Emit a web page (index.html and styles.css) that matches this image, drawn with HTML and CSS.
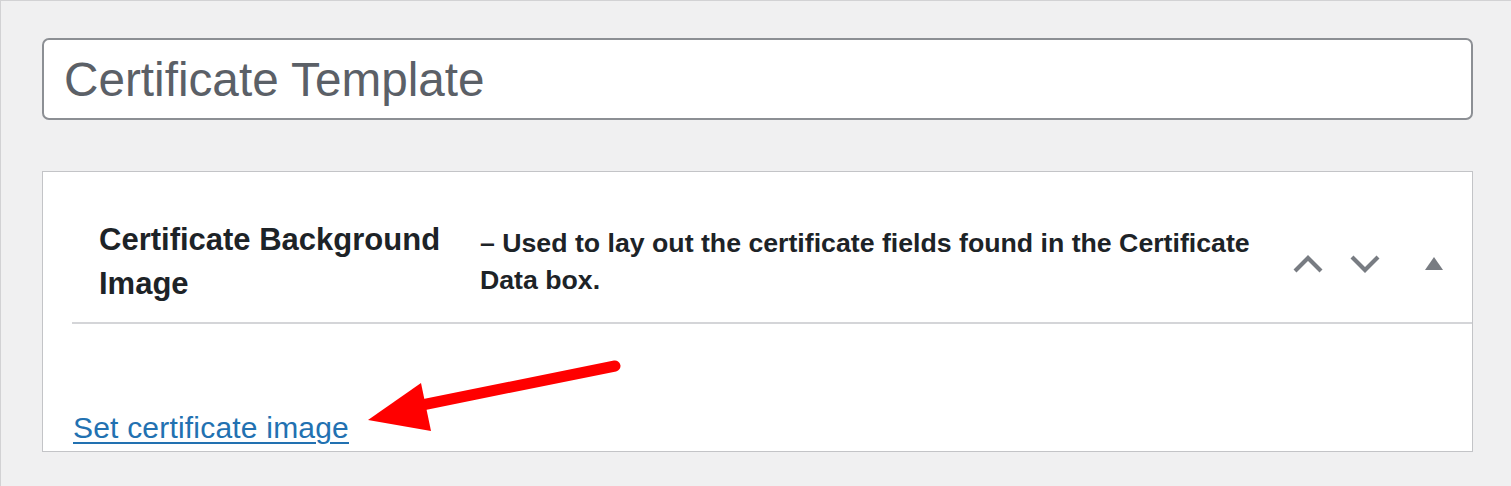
FILE: index.html
```html
<!DOCTYPE html>
<html lang="en">
<head>
<meta charset="utf-8">
<title>Certificate Template</title>
<link rel="stylesheet" href="styles.css">
</head>
<body>
<div class="screen">
  <div class="title-field">Certificate Template</div>

  <div class="postbox">
    <div class="postbox-header">
      <h2 class="hndle">Certificate Background Image</h2>
      <p class="description">– Used to lay out the certificate fields found in the Certificate Data box.</p>
      <div class="handle-actions">
        <button class="handle-btn" aria-label="Move up">
          <svg width="30" height="18" viewBox="0 0 30 18"><path d="M2 16 L15 3 L28 16" fill="none" stroke="#787c82" stroke-width="4.2"/></svg>
        </button>
        <button class="handle-btn" aria-label="Move down">
          <svg width="30" height="18" viewBox="0 0 30 18"><path d="M2 2 L15 15 L28 2" fill="none" stroke="#787c82" stroke-width="4.2"/></svg>
        </button>
        <button class="handle-btn toggle" aria-label="Toggle panel">
          <svg width="18" height="14" viewBox="0 0 18 14"><path d="M9 0 L18 13 L0 13 Z" fill="#787c82"/></svg>
        </button>
      </div>
    </div>
    <div class="inside">
      <a class="set-link" href="#">Set certificate image</a>
    </div>
  </div>

  <svg class="annotation-arrow" width="265" height="85" viewBox="0 0 265 85">
    <line x1="255" y1="11" x2="62" y2="50" stroke="#ff0000" stroke-width="11" stroke-linecap="round"/>
    <polygon points="61,28 8,65 71,76" fill="#ff0000"/>
  </svg>
</div>
</body>
</html>
```

FILE: styles.css
```css
html, body {
  margin: 0;
  padding: 0;
}

body {
  background: #f0f0f1;
  font-family: "Liberation Sans", Arial, sans-serif;
}

.screen {
  position: relative;
  box-sizing: border-box;
  width: 1511px;
  height: 486px;
  border-top: 1px solid #d2d2d4;
  border-left: 1px solid #d2d2d4;
  padding: 37px 38px 0 41px;
  overflow: hidden;
}

.title-field {
  box-sizing: border-box;
  height: 82px;
  background: #fff;
  border: 2px solid #8c8f94;
  border-radius: 7px;
  padding: 2px 0 0 20px;
  display: flex;
  align-items: center;
  font-size: 47.7px;
  color: #5b6067;
  line-height: 1;
}

.postbox {
  margin-top: 51px;
  background: #fff;
  border: 1px solid #c3c4c7;
  height: 281px;
  box-sizing: border-box;
}

.postbox-header {
  display: flex;
  align-items: center;
  margin-left: 29px;
  padding: 46px 10px 16px 27px;
  border-bottom: 2px solid #d4d5d8;
}

.hndle {
  flex: 0 0 360px;
  margin: 0;
  font-size: 31px;
  line-height: 44px;
  font-weight: 700;
  color: #1d2327;
}

.description {
  flex: 0 0 787px;
  margin: 0 0 0 21px;
  font-size: 26.7px;
  line-height: 37px;
  font-weight: 700;
  color: #1d2327;
}

.handle-actions {
  display: flex;
  align-items: center;
  margin-left: auto;
  padding-top: 4px;
}

.handle-btn {
  width: 57px;
  height: 40px;
  padding: 0;
  border: 0;
  background: transparent;
  display: flex;
  align-items: center;
  justify-content: center;
}

.handle-btn.toggle {
  margin-left: 12px;
}

.inside {
  padding: 84px 0 0 30px;
}

.set-link {
  font-size: 30px;
  letter-spacing: 0.2px;
  line-height: 40px;
  color: #2271b1;
  text-decoration: underline;
  text-underline-offset: 4px;
  text-decoration-thickness: 2px;
}

.annotation-arrow {
  position: absolute;
  left: 359px;
  top: 354px;
}
```
